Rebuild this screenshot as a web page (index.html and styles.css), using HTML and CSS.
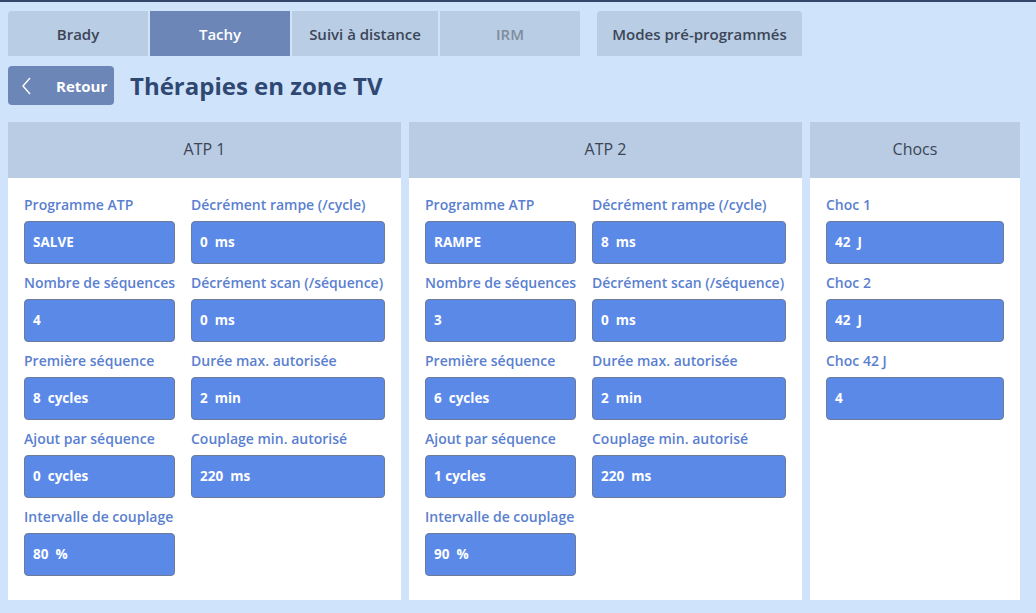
FILE: index.html
```html
<!DOCTYPE html>
<html lang="fr">

<head>
    <meta charset="UTF-8">
    <meta name="viewport" content="width=device-width, initial-scale=1.0">
    <title>Thérapies en zone TV</title>
    <link rel="stylesheet" href="styles.css">
</head>

<body>
    <div class="page">
        <div class="tabs">
            <a href="javascript:;" class="tab first">Brady</a>
            <a href="javascript:;" class="tab active">Tachy</a>
            <a href="javascript:;" class="tab wide">Suivi à distance</a>
            <a href="javascript:;" class="tab disabled">IRM</a>
            <a href="javascript:;" class="tab modes">Modes pré-programmés</a>
        </div>

        <div class="head">
            <a href="javascript:;" class="back">
                <svg width="10" height="18" viewBox="0 0 10 18">
                    <polyline points="8,1 1,9 8,17" fill="none" stroke="#fff" stroke-width="1.4" />
                </svg>
                <span>Retour</span>
            </a>
            <h1>Thérapies en zone TV</h1>
        </div>

        <div class="panels">
            <div class="panel">
                <div class="panel-title">ATP 1</div>
                <div class="panel-body">
                    <div class="field">
                        <label>Programme ATP</label>
                        <div class="value">SALVE</div>
                    </div>
                    <div class="field">
                        <label>Décrément rampe (/cycle)</label>
                        <div class="value">0&nbsp; ms</div>
                    </div>
                    <div class="field">
                        <label>Nombre de séquences</label>
                        <div class="value">4</div>
                    </div>
                    <div class="field">
                        <label>Décrément scan (/séquence)</label>
                        <div class="value">0&nbsp; ms</div>
                    </div>
                    <div class="field">
                        <label>Première séquence</label>
                        <div class="value">8&nbsp; cycles</div>
                    </div>
                    <div class="field">
                        <label>Durée max. autorisée</label>
                        <div class="value">2&nbsp; min</div>
                    </div>
                    <div class="field">
                        <label>Ajout par séquence</label>
                        <div class="value">0&nbsp; cycles</div>
                    </div>
                    <div class="field">
                        <label>Couplage min. autorisé</label>
                        <div class="value">220&nbsp; ms</div>
                    </div>
                    <div class="field">
                        <label>Intervalle de couplage</label>
                        <div class="value">80&nbsp; %</div>
                    </div>
                </div>
            </div>

            <div class="panel">
                <div class="panel-title">ATP 2</div>
                <div class="panel-body">
                    <div class="field">
                        <label>Programme ATP</label>
                        <div class="value">RAMPE</div>
                    </div>
                    <div class="field">
                        <label>Décrément rampe (/cycle)</label>
                        <div class="value">8&nbsp; ms</div>
                    </div>
                    <div class="field">
                        <label>Nombre de séquences</label>
                        <div class="value">3</div>
                    </div>
                    <div class="field">
                        <label>Décrément scan (/séquence)</label>
                        <div class="value">0&nbsp; ms</div>
                    </div>
                    <div class="field">
                        <label>Première séquence</label>
                        <div class="value">6&nbsp; cycles</div>
                    </div>
                    <div class="field">
                        <label>Durée max. autorisée</label>
                        <div class="value">2&nbsp; min</div>
                    </div>
                    <div class="field">
                        <label>Ajout par séquence</label>
                        <div class="value">1 cycles</div>
                    </div>
                    <div class="field">
                        <label>Couplage min. autorisé</label>
                        <div class="value">220&nbsp; ms</div>
                    </div>
                    <div class="field">
                        <label>Intervalle de couplage</label>
                        <div class="value">90&nbsp; %</div>
                    </div>
                </div>
            </div>

            <div class="panel small">
                <div class="panel-title">Chocs</div>
                <div class="panel-body">
                    <div class="field">
                        <label>Choc 1</label>
                        <div class="value">42&nbsp; J</div>
                    </div>
                    <div class="field">
                        <label>Choc 2</label>
                        <div class="value">42&nbsp; J</div>
                    </div>
                    <div class="field">
                        <label>Choc 42 J</label>
                        <div class="value">4</div>
                    </div>
                </div>
            </div>
        </div>
    </div>
</body>

</html>
```

FILE: styles.css
```css
body {
    margin: 0;
    background-color: #cfe3fb;
    border-top: 2px solid #34466a;
    font-family: "Open Sans", "Noto Sans", sans-serif;
}

.page {
    padding: 9px 8px 0;
}

.tabs {
    display: flex;
    gap: 2px;
}

.tab {
    display: flex;
    align-items: center;
    justify-content: center;
    width: 140px;
    height: 45px;
    background-color: #b9cde4;
    color: #3b4658;
    font-size: 15px;
    font-weight: 600;
    text-decoration: none;
}

.tab.first {
    border-top-left-radius: 4px;
}

.tab.wide {
    width: 146px;
}

.tab.active {
    background-color: #6b86b7;
    color: #fff;
}

.tab.disabled {
    color: #7f8c9c;
}

.tab.modes {
    width: 205px;
    margin-left: 15px;
    border-radius: 4px 4px 0 0;
}

.head {
    display: flex;
    align-items: center;
    gap: 16px;
    margin-top: 10px;
}

.back {
    display: flex;
    align-items: center;
    width: 106px;
    height: 39px;
    box-sizing: border-box;
    padding-left: 14px;
    background-color: #6b86b7;
    border-radius: 4px;
    color: #fff;
    font-size: 15px;
    font-weight: 700;
    text-decoration: none;
}

.back span {
    margin-left: 24px;
}

h1 {
    margin: 0;
    font-size: 24px;
    font-weight: 700;
    color: #2f4872;
}

.panels {
    display: flex;
    gap: 8px;
    margin-top: 17px;
}

.panel {
    width: 393px;
    height: 478px;
    background-color: #fff;
}

.panel.small {
    width: 210px;
}

.panel-title {
    height: 56px;
    line-height: 54px;
    text-align: center;
    background-color: #b9cce3;
    color: #3a4657;
    font-size: 16px;
}

.panel-body {
    display: grid;
    grid-template-columns: 151px 194px;
    column-gap: 16px;
    row-gap: 9px;
    padding: 17px 16px 0;
}

.panel.small .panel-body {
    grid-template-columns: 178px;
}

.field label {
    display: block;
    height: 20px;
    line-height: 20px;
    margin-bottom: 6px;
    color: #5a7fd0;
    font-size: 14px;
    font-weight: 600;
    white-space: nowrap;
}

.value {
    height: 43px;
    box-sizing: border-box;
    padding-left: 8px;
    line-height: 41px;
    background-color: #5b89e8;
    border: 1px solid #6c7b98;
    border-radius: 4px;
    color: #fff;
    font-size: 13.5px;
    font-weight: 700;
}
```
